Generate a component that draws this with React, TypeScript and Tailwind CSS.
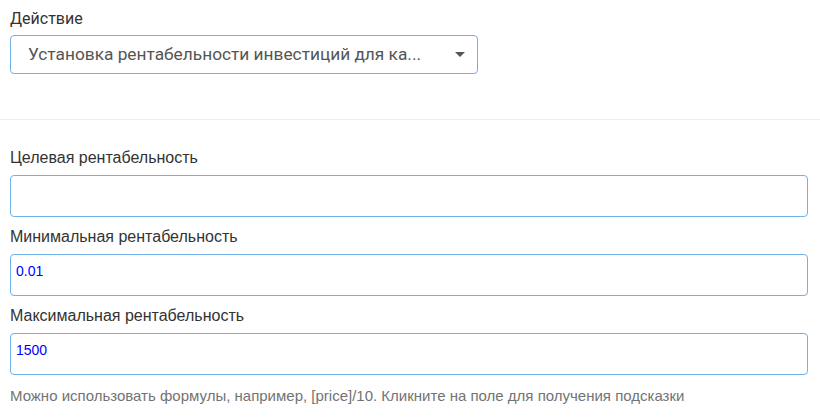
const fields = [
  { label: "Целевая рентабельность", value: "" },
  { label: "Минимальная рентабельность", value: "0.01" },
  { label: "Максимальная рентабельность", value: "1500" },
];

export default function App() {
  return (
    <main className="min-h-screen bg-white text-[#333]">
      <div className="pl-[10px] pr-[12px] pt-[8px]">
        <label className="block font-['Roboto',sans-serif] text-[16px] leading-[22px] text-[#333]">Действие</label>
        <div className="mt-[5px] flex h-[39px] w-[468px] items-center justify-between rounded-[4px] border border-[#72b0e8] pl-[17px] pr-[12px] font-['Roboto',sans-serif] text-[17.3px] text-[#555]">
          <span className="truncate">Установка рентабельности инвестиций для ка...</span>
          <span className="ml-3 h-0 w-0 border-x-[5px] border-t-[5px] border-x-transparent border-t-[#555]" />
        </div>
      </div>
      <div className="mt-[45px] border-t border-[#eee]" />
      <div className="pl-[10px] pr-[12px] pt-[28px] font-['Liberation_Sans',Arial,sans-serif]">
        {fields.map((f) => (
          <div key={f.label} className="mb-[10px]">
            <label className="block text-[16px] leading-[20px] text-[#333]">{f.label}</label>
            <div className="mt-[7px] flex h-[42px] items-center rounded-[4px] border border-[#72b0e8] px-[5px] pb-[7px] text-[14px] text-[#0000ff]">
              {f.value}
            </div>
          </div>
        ))}
        <p className="mt-[5px] text-[15px] text-[#737373]">
          Можно использовать формулы, например, [price]/10. Кликните на поле для получения подсказки
        </p>
      </div>
    </main>
  );
}
